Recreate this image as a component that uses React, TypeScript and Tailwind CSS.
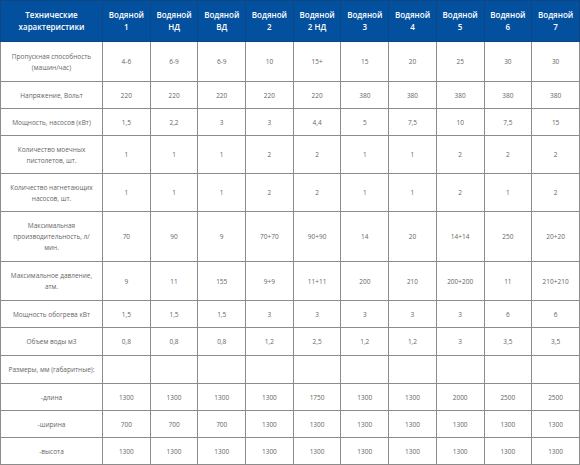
import React from "react";

const headers: React.ReactNode[] = [
  <>Водяной<br />1</>,
  <>Водяной<br />НД</>,
  <>Водяной<br />ВД</>,
  <>Водяной<br />2</>,
  <>Водяной<br />2 НД</>,
  <>Водяной<br />3</>,
  <>Водяной<br />4</>,
  <>Водяной<br />5</>,
  <>Водяной<br />6</>,
  <>Водяной<br />7</>,
];

type Row = { h: string; label: React.ReactNode; vals: string[] };

const rows: Row[] = [
  { h: "h-[40px]", label: <>Пропускная способность<br />(машин/час)</>, vals: ["4-6", "6-9", "6-9", "10", "15+", "15", "20", "25", "30", "30"] },
  { h: "h-[27px]", label: <>Напряжение, Вольт</>, vals: ["220", "220", "220", "220", "220", "380", "380", "380", "380", "380"] },
  { h: "h-[27px]", label: <>Мощность, насосов (кВт)</>, vals: ["1,5", "2,2", "3", "3", "4,4", "5", "7,5", "10", "7,5", "15"] },
  { h: "h-[38px]", label: <>Количество моечных<br />пистолетов, шт.</>, vals: ["1", "1", "1", "2", "2", "1", "1", "2", "2", "2"] },
  { h: "h-[38px]", label: <>Количество нагнетающих<br />насосов, шт.</>, vals: ["1", "1", "1", "2", "2", "1", "1", "2", "1", "2"] },
  { h: "h-[50px]", label: <>Максимальная<br />производительность, л/<br />мин.</>, vals: ["70", "90", "9", "70+70", "90+90", "14", "20", "14+14", "250", "20+20"] },
  { h: "h-[39px]", label: <>Максимальное давление,<br />атм.</>, vals: ["9", "11", "155", "9+9", "11+11", "200", "210", "200+200", "11", "210+210"] },
  { h: "h-[27px]", label: <>Мощность обогрева кВт</>, vals: ["1,5", "1,5", "1,5", "3", "3", "3", "3", "3", "6", "6"] },
  { h: "h-[28px]", label: <>Объем воды м3</>, vals: ["0,8", "0,8", "0,8", "1,2", "2,5", "1,2", "1,2", "3", "3,5", "3,5"] },
  { h: "h-[28px]", label: <>Размеры, мм (габаритные):</>, vals: ["", "", "", "", "", "", "", "", "", ""] },
  { h: "h-[27px]", label: <>-длина</>, vals: ["1300", "1300", "1300", "1300", "1750", "1300", "1300", "2000", "2500", "2500"] },
  { h: "h-[27px]", label: <>-ширина</>, vals: ["700", "700", "700", "1300", "1300", "1300", "1300", "1300", "1300", "1300"] },
  { h: "h-[27px]", label: <>-высота</>, vals: ["1300", "1300", "1300", "1300", "1300", "1300", "1300", "1300", "1300", "1300"] },
];

export default function App() {
  return (
    <div className="w-[580px] h-[465px] overflow-hidden bg-white" style={{ fontFamily: '"Open Sans", "Noto Sans", sans-serif' }}>
      <table className="w-[580px] table-fixed border-collapse">
        <colgroup>
          <col className="w-[102px]" />
          {headers.map((_, i) => (
            <col key={i} />
          ))}
        </colgroup>
        <thead>
          <tr className="h-[41px] bg-[#03509e]">
            <th className="border border-[#0d4682] px-1 py-0 text-center text-[8px] font-semibold leading-[12px] text-white">
              Технические<br />характеристики
            </th>
            {headers.map((h, i) => (
              <th key={i} className="border border-[#0d4682] px-0 py-0 text-center text-[8px] font-semibold leading-[12px] text-white">
                {h}
              </th>
            ))}
          </tr>
        </thead>
        <tbody>
          {rows.map((r, ri) => (
            <tr key={ri} className={r.h}>
              <td className="border border-[#8c8c8c] px-1 py-0 text-center text-[6.5px] leading-[11px] text-[#666666]">
                {r.label}
              </td>
              {r.vals.map((v, vi) => (
                <td key={vi} className="border border-[#8c8c8c] px-0 py-0 text-center text-[6.5px] leading-[11px] text-[#666666]">
                  {v}
                </td>
              ))}
            </tr>
          ))}
        </tbody>
      </table>
    </div>
  );
}
